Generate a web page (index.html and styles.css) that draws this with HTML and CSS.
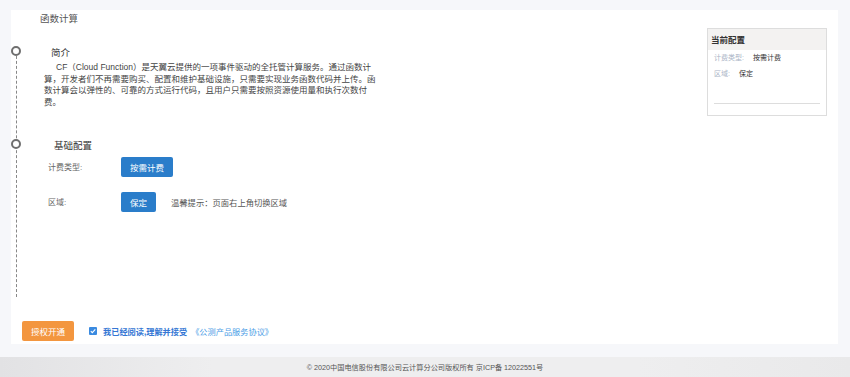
FILE: index.html
```html
<!DOCTYPE html>
<html lang="zh-CN">
  <head>
    <meta charset="UTF-8" />
    <meta name="viewport" content="width=device-width, initial-scale=1.0" />
    <title>函数计算</title>
    <link rel="stylesheet" href="styles.css">
  </head>
  <body>
    <div class="page">
      <div class="card">
        <div class="card-title">函数计算</div>

        <div class="card-body">
          <div class="timeline">
            <div class="step">
              <h2 class="step-title">简介</h2>
              <p class="intro">
                CF（Cloud Function）是天翼云提供的一项事件驱动的全托管计算服务。通过函数计算，开发者们不再需要购买、配置和维护基础设施，只需要实现业务函数代码并上传。函数计算会以弹性的、可靠的方式运行代码，且用户只需要按照资源使用量和执行次数付费。
              </p>
            </div>

            <div class="step step-config">
              <h2 class="step-title">基础配置</h2>
              <div class="form-row">
                <span class="form-label">计费类型:</span>
                <button class="btn btn-blue">按需计费</button>
              </div>
              <div class="form-row">
                <span class="form-label">区域:</span>
                <button class="btn btn-blue btn-small">保定</button>
                <span class="hint">温馨提示：页面右上角切换区域</span>
              </div>
            </div>
          </div>

          <div class="summary">
            <div class="summary-head">当前配置</div>
            <div class="summary-row">
              <span class="summary-label">计费类型:</span>
              <span class="summary-value">按需计费</span>
            </div>
            <div class="summary-row">
              <span class="summary-label">区域:</span>
              <span class="summary-value">保定</span>
            </div>
            <div class="summary-line"></div>
          </div>
        </div>

        <div class="agree-bar">
          <button class="btn btn-orange">授权开通</button>
          <span class="checkbox">
            <svg width="8" height="8" viewBox="0 0 8 8">
              <path d="M1.8 4.1 L3.3 5.6 L6.3 2.4" fill="none" stroke="#fff" stroke-width="1.1" />
            </svg>
          </span>
          <span class="agree-text">我已经阅读,理解并接受</span>
          <a class="agree-link" href="#">《公测产品服务协议》</a>
        </div>
      </div>
    </div>

    <div class="footer">© 2020中国电信股份有限公司云计算分公司版权所有 京ICP备 12022551号</div>
  </body>
</html>
```

FILE: styles.css
```css
body {
  margin: 0;
  font-family: "Liberation Sans", "Noto Sans CJK SC", sans-serif;
  background-color: #f6f7fa;
  color: #333;
}
.page {
  padding: 10px 12px 13px 11px;
}
.card {
  background-color: #fff;
  height: 334px;
  box-sizing: border-box;
  padding-top: 2px;
  display: flex;
  flex-direction: column;
}
.card-title {
  margin-left: 29px;
  font-size: 9.5px;
  line-height: 14px;
  color: #555;
}
.card-body {
  display: flex;
  align-items: flex-start;
  justify-content: space-between;
}
.timeline {
  position: relative;
  margin-top: 20px;
  padding-bottom: 85px;
}
.timeline::before {
  content: "";
  position: absolute;
  left: 5px;
  top: 5px;
  bottom: 0;
  border-left: 1px dashed #888;
}
.step {
  position: relative;
  padding-left: 33px;
}
.step::before {
  content: "";
  position: absolute;
  left: 0;
  top: 0;
  width: 10px;
  height: 10px;
  box-sizing: border-box;
  border: 2px solid #6f6f6f;
  border-radius: 50%;
  background-color: #fff;
}
.step-title {
  margin: 0 0 0 7px;
  font-size: 9.5px;
  font-weight: normal;
  line-height: 14px;
  color: #333;
}
.step-config {
  margin-top: 30px;
}
.step-config .step-title {
  margin-left: 10px;
}
.intro {
  width: 333px;
  margin: 2px 0 0;
  font-size: 8.5px;
  line-height: 11.7px;
  text-indent: 12px;
  color: #444;
}
.form-row {
  display: flex;
  align-items: center;
  margin: 4px 0 0 4px;
}
.form-row + .form-row {
  margin-top: 15px;
}
.form-label {
  width: 73px;
  font-size: 8px;
  color: #666;
}
.hint {
  margin-left: 15px;
  font-size: 8.3px;
  color: #555;
}
.btn {
  border: none;
  border-radius: 2px;
  height: 20px;
  width: 52px;
  padding: 0;
  font-family: inherit;
  font-size: 8.5px;
  color: #fff;
  cursor: pointer;
}
.btn-blue {
  background-color: #2a7dca;
}
.btn-small {
  width: 35px;
}
.btn-orange {
  background-color: #f3963f;
}
.summary {
  width: 120px;
  height: 88px;
  box-sizing: border-box;
  margin: 2px 11px 0 0;
  border: 1px solid #ddd;
}
.summary-head {
  height: 21px;
  padding-left: 3px;
  background-color: #f3f2f1;
  font-size: 8.5px;
  font-weight: bold;
  line-height: 22px;
  color: #333;
}
.summary-row {
  padding-left: 6px;
  font-size: 7px;
  line-height: 16px;
}
.summary-label {
  margin-right: 7px;
  color: #aab4c6;
}
.summary-value {
  color: #333;
}
.summary-line {
  margin: 21px 6px 0;
  border-top: 1px solid #ddd;
}
.agree-bar {
  display: flex;
  align-items: center;
  margin: 24px 0 0 11px;
}
.checkbox {
  display: flex;
  width: 8px;
  height: 8px;
  margin-left: 15px;
  border-radius: 1px;
  background-color: #3a8ae0;
}
.agree-text {
  margin-left: 6px;
  font-size: 8.2px;
  font-weight: bold;
  color: #3577d4;
}
.agree-link {
  margin-left: 4px;
  font-size: 8.2px;
  color: #4c9de6;
  text-decoration: none;
}
.footer {
  height: 20px;
  line-height: 22px;
  text-align: center;
  font-size: 7.2px;
  color: #555;
  background: linear-gradient(to right, #e2e2e4, #eeeeef 25%, #eeeeef 75%, #e9e9ea);
}
```
